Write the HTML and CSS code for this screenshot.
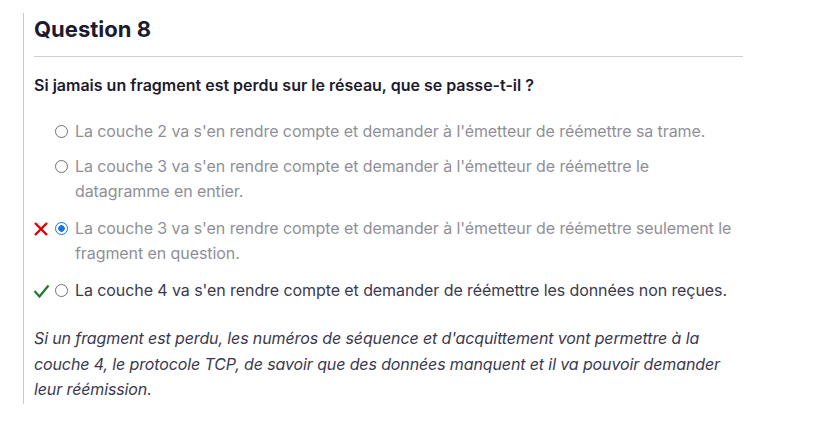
FILE: index.html
```html
<!DOCTYPE html>
<html lang="fr">
<head>
<meta charset="utf-8">
<link rel="stylesheet" href="styles.css">
</head>
<body>
<section class="question">
  <h2 class="title">Question 8</h2>
  <p class="prompt">Si jamais un fragment est perdu sur le réseau, que se passe-t-il ?</p>
  <ul class="options">
    <li class="option">
      <span class="mark"></span>
      <span class="radio"></span>
      <span class="text">La couche 2 va s'en rendre compte et demander à l'émetteur de réémettre sa trame.</span>
    </li>
    <li class="option">
      <span class="mark"></span>
      <span class="radio"></span>
      <span class="text">La couche 3 va s'en rendre compte et demander à l'émetteur de réémettre le datagramme en entier.</span>
    </li>
    <li class="option marked">
      <span class="mark">
        <svg width="16" height="16" viewBox="0 0 16 16"><path d="M2 2 L14 14 M14 2 L2 14" stroke="#e00000" stroke-width="2.4" fill="none"/></svg>
      </span>
      <span class="radio checked"></span>
      <span class="text">La couche 3 va s'en rendre compte et demander à l'émetteur de réémettre seulement le fragment en question.</span>
    </li>
    <li class="option marked correct">
      <span class="mark">
        <svg width="17" height="16" viewBox="0 0 17 16"><path d="M1.5 8 L6.5 13.5 L15.5 2.5" stroke="#1e7a2e" stroke-width="2.2" fill="none"/></svg>
      </span>
      <span class="radio"></span>
      <span class="text">La couche 4 va s'en rendre compte et demander de réémettre les données non reçues.</span>
    </li>
  </ul>
  <p class="explanation">Si un fragment est perdu, les numéros de séquence et d'acquittement vont permettre à la couche 4, le protocole TCP, de savoir que des données manquent et il va pouvoir demander leur réémission.</p>
</section>
</body>
</html>
```

FILE: styles.css
```css
html, body {
  margin: 0;
  padding: 0;
  background: #ffffff;
}
body {
  font-family: Inter, "Noto Sans", sans-serif;
  color: #1d1b2e;
}
.question {
  margin: 13px 0 0 23px;
  padding: 0 0 1px 10px;
  border-left: 1px solid #c8c8c8;
  width: 709px;
}
.title {
  margin: 0;
  padding: 2px 0 13px;
  font-size: 22px;
  font-weight: 700;
  line-height: 28px;
  color: #1d1b2e;
  border-bottom: 1px solid #cfcfcf;
}
.prompt {
  margin: 15px 0 0;
  font-size: 16px;
  font-weight: 600;
  line-height: 26px;
  color: #1d1b2e;
}
.options {
  list-style: none;
  margin: 21px 0 0;
  padding: 0;
  display: flex;
  flex-direction: column;
  gap: 10px;
}
.option {
  display: flex;
  align-items: flex-start;
  font-size: 16px;
  line-height: 25px;
  letter-spacing: -0.08px;
  color: #908f98;
}
.option.marked {
  padding-top: 2px;
}
.option.correct {
  color: #3a3950;
}
.mark {
  width: 18px;
  height: 25px;
  flex: none;
  display: flex;
  align-items: center;
  margin-left: -1px;
  margin-right: 4px;
}
.radio {
  width: 13px;
  height: 13px;
  flex: none;
  box-sizing: border-box;
  border: 1.5px solid #707070;
  border-radius: 50%;
  margin-top: 6px;
  margin-right: 7px;
}
.radio.checked {
  border: 1.5px solid #1a73e8;
  background: radial-gradient(circle, #1a73e8 0 3px, #ffffff 3.5px);
}
.text {
  flex: 1;
  padding-right: 6px;
}
.explanation {
  margin: 23px 0 0;
  font-size: 16px;
  font-style: italic;
  line-height: 25.5px;
  letter-spacing: -0.12px;
  color: #3a3950;
}
```
